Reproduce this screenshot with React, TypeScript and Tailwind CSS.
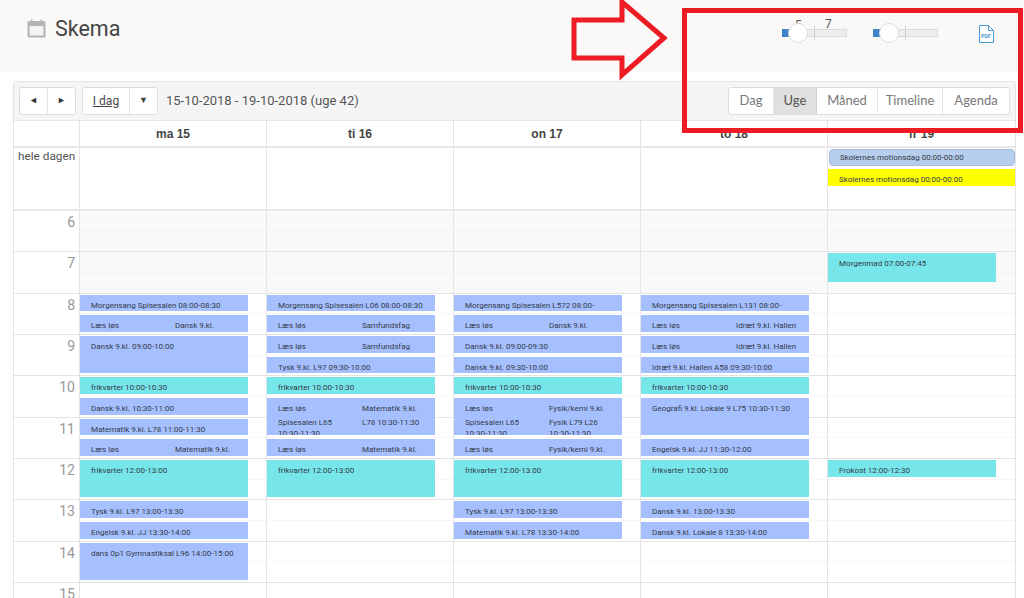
import React from "react";

interface ICalEvent {
    day: number;
    start: number;
    span?: number;
    color?: "blue" | "cyan";
    left: string[];
    right?: string[];
    className?: string;
}

const days = ["ma 15", "ti 16", "on 17", "to 18", "fr 19"];
const hours = [6, 7, 8, 9, 10, 11, 12, 13, 14, 15];

const events: ICalEvent[] = [
    // mandag
    { day: 0, start: 8, left: ["Morgensang Spisesalen 08:00-08:30"] },
    { day: 0, start: 8.5, left: ["Læs løs"], right: ["Dansk 9.kl."] },
    { day: 0, start: 9, span: 2, left: ["Dansk 9.kl. 09:00-10:00"] },
    { day: 0, start: 10, color: "cyan", left: ["frikvarter 10:00-10:30"] },
    { day: 0, start: 10.5, left: ["Dansk 9.kl. 10:30-11:00"] },
    { day: 0, start: 11, left: ["Matematik 9.kl. L78 11:00-11:30"] },
    { day: 0, start: 11.5, left: ["Læs løs"], right: ["Matematik 9.kl."] },
    { day: 0, start: 12, span: 2, color: "cyan", left: ["frikvarter 12:00-13:00"] },
    { day: 0, start: 13, left: ["Tysk 9.kl. L97 13:00-13:30"] },
    { day: 0, start: 13.5, left: ["Engelsk 9.kl. JJ 13:30-14:00"] },
    { day: 0, start: 14, span: 2, left: ["dans 0p1 Gymnastiksal L96 14:00-15:00"] },
    // tirsdag
    { day: 1, start: 8, left: ["Morgensang Spisesalen L06 08:00-08:30"] },
    { day: 1, start: 8.5, left: ["Læs løs"], right: ["Samfundsfag"] },
    { day: 1, start: 9, left: ["Læs løs"], right: ["Samfundsfag"] },
    { day: 1, start: 9.5, left: ["Tysk 9.kl. L97 09:30-10:00"] },
    { day: 1, start: 10, color: "cyan", left: ["frikvarter 10:00-10:30"] },
    { day: 1, start: 10.5, span: 2, left: ["Læs løs", "Spisesalen L65", "10:30-11:30"], right: ["Matematik 9.kl.", "L78 10:30-11:30"] },
    { day: 1, start: 11.5, left: ["Læs løs"], right: ["Matematik 9.kl."] },
    { day: 1, start: 12, span: 2, color: "cyan", left: ["frikvarter 12:00-13:00"] },
    // onsdag
    { day: 2, start: 8, left: ["Morgensang Spisesalen L572 08:00-"] },
    { day: 2, start: 8.5, left: ["Læs løs"], right: ["Dansk 9.kl."] },
    { day: 2, start: 9, left: ["Dansk 9.kl. 09:00-09:30"] },
    { day: 2, start: 9.5, left: ["Dansk 9.kl. 09:30-10:00"] },
    { day: 2, start: 10, color: "cyan", left: ["frikvarter 10:00-10:30"] },
    { day: 2, start: 10.5, span: 2, left: ["Læs løs", "Spisesalen L65", "10:30-11:30"], right: ["Fysik/kemi 9.kl.", "Fysik L79 L26", "10:30-11:30"] },
    { day: 2, start: 11.5, left: ["Læs løs"], right: ["Fysik/kemi 9.kl."] },
    { day: 2, start: 12, span: 2, color: "cyan", left: ["frikvarter 12:00-13:00"] },
    { day: 2, start: 13, left: ["Tysk 9.kl. L97 13:00-13:30"] },
    { day: 2, start: 13.5, left: ["Matematik 9.kl. L78 13:30-14:00"] },
    // torsdag
    { day: 3, start: 8, left: ["Morgensang Spisesalen L131 08:00-"] },
    { day: 3, start: 8.5, left: ["Læs løs"], right: ["Idræt 9.kl. Hallen"] },
    { day: 3, start: 9, left: ["Læs løs"], right: ["Idræt 9.kl. Hallen"] },
    { day: 3, start: 9.5, left: ["Idræt 9.kl. Hallen A58 09:30-10:00"] },
    { day: 3, start: 10, color: "cyan", left: ["frikvarter 10:00-10:30"] },
    { day: 3, start: 10.5, span: 2, left: ["Geografi 9.kl. Lokale 9 L75 10:30-11:30"] },
    { day: 3, start: 11.5, left: ["Engelsk 9.kl. JJ 11:30-12:00"] },
    { day: 3, start: 12, span: 2, color: "cyan", left: ["frikvarter 12:00-13:00"] },
    { day: 3, start: 13, left: ["Dansk 9.kl. 13:00-13:30"] },
    { day: 3, start: 13.5, left: ["Dansk 9.kl. Lokale 8 13:30-14:00"] },
    // fredag
    { day: 4, start: 7, span: 2, color: "cyan", left: ["Morgenmad 07:00-07:45"], className: "!mb-[12px]" },
    { day: 4, start: 12, color: "cyan", left: ["Frokost 12:00-12:30"] },
];

const Slider = (props: { labels?: boolean }) => {
    return (
        <div className="relative flex h-[8px] w-[65px] items-center bg-[#eeeeee] border border-[#dcdcdc]">
            <div className="h-[8px] w-[8px] -ml-px bg-[#3d85c8]" />
            <div className="ml-[24px] h-[14px] w-px shrink-0 bg-[#cfcfcf]" />
            {props.labels && <span className="absolute left-[12px] top-[-12px] text-[12px] leading-[14px] text-[#555]">5</span>}
            {props.labels && <span className="absolute left-[42px] top-[-13px] text-[12px] leading-[14px] text-[#555]">7</span>}
            <div className="absolute left-[5px] top-[-7px] h-[20px] w-[20px] rounded-full border border-[#dddddd] bg-white" />
        </div>
    );
};

const EventBlock = ({ ev }: { ev: ICalEvent }) => {
    const row = (ev.start - 6) * 2 + 1;
    const bg = ev.color === "cyan" ? "bg-[#76e6ea]" : "bg-[#a6c0ff]";

    return (
        <div
            className={`z-10 ml-px mt-px mb-[3px] flex w-[168px] overflow-hidden text-[8px] leading-[11px] text-[#333a48] ${bg} ${ev.className || ""}`}
            style={{ gridColumn: ev.day + 2, gridRow: `${row} / span ${ev.span || 1}` }}
        >
            <div className={`pl-[11px] pt-[5px] ${ev.right ? "w-[84px] shrink-0" : "w-full"}`}>
                {ev.left.map((line, i) => (
                    <div key={i} className={`whitespace-nowrap ${i === 1 ? "mt-[3px]" : ""}`}>{line}</div>
                ))}
            </div>
            {ev.right && (
                <div className="w-[84px] shrink-0 pl-[11px] pt-[5px]">
                    {ev.right.map((line, i) => (
                        <div key={i} className={`whitespace-nowrap ${i === 1 ? "mt-[3px]" : ""}`}>{line}</div>
                    ))}
                </div>
            )}
        </div>
    );
};

const App = () => {
    return (
        <div className="relative h-[598px] w-[1024px] overflow-hidden bg-white font-['Roboto',sans-serif]">

            {/* top bar */}
            <div className="flex h-[72px] items-start bg-[#faf9f7]">
                <svg className="ml-[27px] mt-[19px]" width="19" height="19" viewBox="0 0 19 19">
                    <rect x="0.5" y="2" width="18" height="16.5" rx="1.5" fill="#b3b3b3" />
                    <rect x="2.5" y="7" width="14" height="9.5" fill="#f4f3f1" />
                    <rect x="4" y="0.5" width="1.5" height="3.5" fill="#b3b3b3" />
                    <rect x="13.5" y="0.5" width="1.5" height="3.5" fill="#b3b3b3" />
                </svg>
                <h1 className="ml-[9px] mt-[15px] text-[21.5px] leading-[28px] text-[#444444]">Skema</h1>
                <div className="ml-auto mr-[30px] mt-[25px] flex items-start">
                    <div className="mt-[4px] mr-[26px]"><Slider labels /></div>
                    <div className="mt-[4px] mr-[41px]"><Slider /></div>
                    <svg width="15" height="18" viewBox="0 0 15 18">
                        <path d="M0.5 0.5H9.5L14.5 5.5V17.5H0.5Z" fill="white" stroke="#4a9ad4" strokeWidth="1" />
                        <path d="M9.5 0.5V5.5H14.5" fill="none" stroke="#4a9ad4" strokeWidth="1" />
                        <text x="2" y="13" fontSize="5.5" fontWeight="700" fontFamily="Roboto, sans-serif" fill="#4a9ad4">PDF</text>
                    </svg>
                </div>
            </div>

            {/* calendar */}
            <div className="ml-[13px] mt-[9px] w-[1003px] rounded-t-[3px] border-x border-t border-[#e4e4e4]">

                <div className="flex h-[38px] items-center bg-[#f5f5f5] pl-[5px] pr-[5px]">
                    <div className="flex h-[28px] w-[57px] rounded-[3px] border border-[#dddddd] bg-white text-[#333]">
                        <button className="flex flex-1 items-center justify-center border-r border-[#e6e6e6] text-[9px]">◄</button>
                        <button className="flex flex-1 items-center justify-center text-[9px]">►</button>
                    </div>
                    <div className="ml-[6px] flex h-[28px] w-[76px] rounded-[3px] border border-[#dddddd] bg-white text-[#444]">
                        <button className="w-[47px] border-r border-[#e6e6e6] text-[12px] underline">I dag</button>
                        <button className="flex-1 text-[9px]">▼</button>
                    </div>
                    <span className="ml-[8px] text-[13px] text-[#555555]">15-10-2018 - 19-10-2018 (uge 42)</span>

                    <div className="ml-auto flex h-[28px] rounded-[3px] border border-[#dddddd] bg-white font-['Lato',sans-serif] text-[13px] text-[#777777]">
                        <button className="w-[45px] border-r border-[#e6e6e6]">Dag</button>
                        <button className="w-[43px] border-r border-[#d2d2d2] bg-[#e0e0e0] text-[#555]">Uge</button>
                        <button className="w-[61px] border-r border-[#e6e6e6]">Måned</button>
                        <button className="w-[65px] border-r border-[#e6e6e6]">Timeline</button>
                        <button className="w-[66px]">Agenda</button>
                    </div>
                </div>

                <div className="grid h-[28px] grid-cols-[65px_repeat(4,187px)_188px] border-t border-b-2 border-[#e8e8e8]">
                    <div />
                    {days.map((d) => (
                        <div key={d} className="flex items-center justify-center border-l border-[#e4e4e4] font-['Liberation_Sans',sans-serif] text-[12px] font-bold text-[#444444]">{d}</div>
                    ))}
                </div>

                <div className="grid h-[63px] grid-cols-[65px_repeat(4,187px)_188px] border-b-2 border-[#e8e8e8]">
                    <div className="pl-[4px] pt-[1px] text-[11.8px] leading-[14px] text-[#555555] whitespace-nowrap">hele dagen</div>
                    <div className="border-l border-[#e4e4e4]" />
                    <div className="border-l border-[#e4e4e4]" />
                    <div className="border-l border-[#e4e4e4]" />
                    <div className="border-l border-[#e4e4e4]" />
                    <div className="flex flex-col border-l border-[#e4e4e4] pt-px text-[8px] leading-[11px] text-[#333a48]">
                        <div className="ml-px h-[17px] rounded-[4px] border border-[#a3bbe0] bg-[#b6cdec] pl-[10px] pt-[2px]">Skolernes motionsdag 00:00-00:00</div>
                        <div className="mt-[3px] h-[17px] bg-[#ffff00] pl-[11px] pt-[5px]">Skolernes motionsdag 00:00-00:00</div>
                    </div>
                </div>

                <div className="grid grid-cols-[65px_repeat(4,187px)_188px] grid-rows-[repeat(20,20.67px)]">
                    {hours.map((h, hi) => (
                        <React.Fragment key={h}>
                            <div
                                className="flex justify-end border-b border-[#e4e4e4] pr-[4px] pt-[2px] text-[14px] leading-[18px] text-[#999999]"
                                style={{ gridColumn: 1, gridRow: `${hi * 2 + 1} / span 2` }}
                            >
                                {h}
                            </div>
                            {days.map((d, di) => (
                                <React.Fragment key={d}>
                                    <div
                                        className={`border-l border-b border-l-[#e4e4e4] border-b-[#eeeeee] border-dotted [border-left-style:solid] ${h < 8 ? "bg-[#f9f9f9]" : ""}`}
                                        style={{ gridColumn: di + 2, gridRow: hi * 2 + 1 }}
                                    />
                                    <div
                                        className={`border-l border-b border-[#e4e4e4] ${h < 8 ? "bg-[#f9f9f9]" : ""}`}
                                        style={{ gridColumn: di + 2, gridRow: hi * 2 + 2 }}
                                    />
                                </React.Fragment>
                            ))}
                        </React.Fragment>
                    ))}
                    {events.map((ev, i) => (
                        <EventBlock key={i} ev={ev} />
                    ))}
                </div>
            </div>

            {/* annotation */}
            <div className="absolute left-[682px] top-[8px] z-20 h-[125px] w-[341px] border-[5px] border-[#ed1c24]" />
            <svg className="absolute left-0 top-0 z-20" width="680" height="84" viewBox="0 0 680 84">
                <polygon points="574,20 622,20 622,2 664,38 622,75 622,58 574,58" fill="none" stroke="#ed1c24" strokeWidth="5" />
            </svg>
        </div>
    );
};

export default App;
